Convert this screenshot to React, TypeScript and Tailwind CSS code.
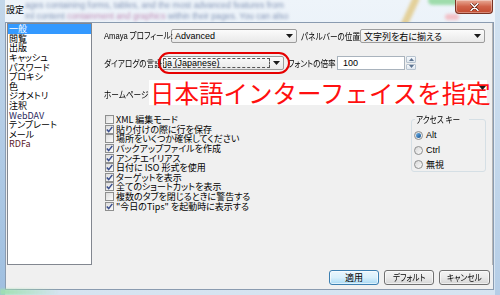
import React from "react";

const items = ["一般", "閲覧", "出版", "キャッシュ", "パスワード", "プロキシ", "色", "ジオメトリ", "注釈", "WebDAV", "テンプレート", "メール", "RDFa"];

const checks: [string, boolean][] = [
  ["XML 編集モード", false],
  ["貼り付けの際に行を保存", true],
  ["場所をいくつか確保してください", false],
  ["バックアップファイルを作成", true],
  ["アンチエイリアス", true],
  ["日付に ISO 形式を使用", true],
  ["ターゲットを表示", true],
  ["全てのショートカットを表示", true],
  ["複数のタブを閉じるときに警告する", false],
  ["\"今日のTips\" を起動時に表示する", true],
];

function Arrow() {
  return (
    <svg width="7" height="4" viewBox="0 0 7 4" className="shrink-0">
      <path d="M0 0 H7 L3.5 4 Z" fill="#1a1a1a" />
    </svg>
  );
}

function Label({ children }: { children: React.ReactNode }) {
  return <span className="inline-block whitespace-nowrap scale-x-[0.85] origin-left">{children}</span>;
}

function Check({ on }: { on: boolean }) {
  return (
    <span className="w-[9px] h-[9px] shrink-0 border border-[#8e8f8f] bg-gradient-to-br from-[#dcdcdc] to-[#fbfbfb] flex items-center justify-center">
      {on && (
        <svg width="7" height="7" viewBox="0 0 7 7">
          <path d="M0.8 3.4 L2.7 5.6 L6.3 0.9" stroke="#3b4f8e" strokeWidth="1.5" fill="none" />
        </svg>
      )}
    </span>
  );
}

function Radio({ on }: { on: boolean }) {
  return (
    <span className="w-[9px] h-[9px] shrink-0 rounded-full border border-[#8e8f8f] bg-gradient-to-br from-[#d8d8d8] to-[#fafafa] flex items-center justify-center">
      {on && <span className="w-[5px] h-[5px] rounded-full bg-gradient-to-br from-[#6fb6ec] to-[#12508f]" />}
    </span>
  );
}

export default function App() {
  return (
    <div className="relative w-[500px] h-[295px] overflow-hidden bg-gradient-to-b from-[#eef4fa] to-[#d6e4f1] font-['Noto_Sans_CJK_JP',sans-serif] [font-feature-settings:'palt'] text-[9px] leading-none text-black">
      {/* blurred desktop behind the glass */}
      <div className="absolute left-0 top-0 w-[500px] h-[22px] blur-[1.4px] pointer-events-none">
        <div className="absolute left-[25px] top-[1px] whitespace-nowrap text-[8.6px] text-[#8193b5] font-['Liberation_Sans',sans-serif]">
          ages containing forms, tables, and the most advanced features from
        </div>
        <div className="absolute left-[25px] top-[12px] whitespace-nowrap text-[8.6px] text-[#8193b5] font-['Liberation_Sans',sans-serif]">
          ml content <span className="text-[#c08bb6]">containment and graphics</span> within their pages. You can also
        </div>
        <div className="absolute left-[406px] top-[-4px] w-[7px] h-[34px] rotate-[25deg] bg-[#e3d09a]" />
        <div className="absolute left-[428px] top-[-4px] w-[32px] h-[9px] rounded-full bg-[#9fdcac]" />
        <div className="absolute left-[445px] top-[14px] w-[14px] h-[6px] rounded-full bg-[#f2c0c7]" />
      </div>
      <div className="absolute left-0 top-0 w-[5px] h-[295px] bg-gradient-to-b from-[#c3d7ea] to-[#9fbfe0] pointer-events-none" />
      <div className="absolute right-0 top-0 w-[5px] h-[295px] bg-gradient-to-b from-[#d4e3f1] to-[#b5cde6] pointer-events-none" />

      <div className="relative flex flex-col h-full">
        {/* title bar */}
        <div className="h-[22px] shrink-0 flex items-center pl-[6px] pb-[4px] relative">
          <span className="text-[9px]">設定</span>
          <div className="absolute right-[7px] top-0 w-[38px] h-[14px] rounded-b-[4px] border border-t-0 border-[#7a3324] bg-gradient-to-b from-[#e8ab98] via-[#d0634a] to-[#c24a2f] flex items-center justify-center shadow-[inset_0_0_0_1px_rgba(255,255,255,0.35)]">
            <svg width="9" height="8" viewBox="0 0 9 8">
              <path d="M1 0.5 L8 7.5 M8 0.5 L1 7.5" stroke="#5a1a0c" strokeWidth="2.6" strokeLinecap="round" />
              <path d="M1 0.5 L8 7.5 M8 0.5 L1 7.5" stroke="#ffffff" strokeWidth="1.5" strokeLinecap="round" />
            </svg>
          </div>
        </div>

        {/* client area */}
        <div className="flex-1 ml-[5px] mr-[6px] mb-[5px] bg-[#f0f0f0] border border-[#8a9bb0] flex flex-col min-h-0">
          <div className="flex h-[242px] shrink-0">
            {/* category list */}
            <div className="ml-[1px] w-[85px] h-[242px] bg-white border border-[#828790] shrink-0">
              {items.map((t, i) => (
                <div
                  key={t}
                  className={
                    i === 0
                      ? "h-[9.6px] flex items-center pl-[1px] bg-[#3399ff] text-white"
                      : i === 9
                      ? "h-[9.6px] flex items-center pl-[1px] text-[#2a275c]"
                      : i === 12
                      ? "h-[9.6px] flex items-center pl-[1px] text-[#5e1b2b]"
                      : "h-[9.6px] flex items-center pl-[1px]"
                  }
                >
                  {t}
                </div>
              ))}
            </div>

            {/* settings panel */}
            <div className="relative flex-1 pl-[12px] pt-[6px] border-r border-[#b5b5b5]">
              {/* row 1 */}
              <div className="flex items-center h-[14px]">
                <div className="w-[67px] shrink-0">
                  <Label>
                    <span className="font-['Liberation_Sans',sans-serif]">Amaya</span> プロフィール:
                  </Label>
                </div>
                <div className="w-[126px] shrink-0 h-[14px] border border-[#9c9c9c] rounded-[2px] bg-gradient-to-b from-[#fbfbfb] to-[#e9e9e9] flex items-center pl-[3px] pr-[3px] justify-between">
                  <span className="font-['Liberation_Sans',sans-serif]">Advanced</span>
                  <Arrow />
                </div>
                <div className="ml-[4px] w-[59px] shrink-0">
                  <Label>パネルバーの位置</Label>
                </div>
                <div className="w-[125px] shrink-0 h-[14px] border border-[#9c9c9c] rounded-[2px] bg-gradient-to-b from-[#fbfbfb] to-[#e9e9e9] flex items-center pl-[3px] pr-[3px] justify-between">
                  <span>文字列を右に揃える</span>
                  <Arrow />
                </div>
              </div>

              {/* row 2 */}
              <div className="flex items-center h-[14px] mt-[13px]">
                <div className="w-[56px] shrink-0">
                  <Label>ダイアログの言語</Label>
                </div>
                <div className="w-[124px] shrink-0 h-[14px] border border-[#9c9c9c] rounded-[2px] bg-gradient-to-b from-[#fbfbfb] to-[#e9e9e9] flex items-center pl-[2px] pr-[3px]">
                  <div className="w-[107px] h-[10px] border border-dashed border-[#555] flex items-center pl-[1px] font-['Liberation_Sans',sans-serif]">
                    ja (Japanese)
                  </div>
                  <div className="flex-1 flex justify-end">
                    <Arrow />
                  </div>
                </div>
                <div className="ml-[4px] w-[49px] shrink-0">
                  <Label>フォントの倍率</Label>
                </div>
                <div className="w-[68px] shrink-0 h-[14px] border border-[#a9b3bd] bg-white flex items-center pl-[5px] font-['Liberation_Sans',sans-serif]">
                  100
                </div>
                <div className="ml-[1px] w-[10px] h-[14px] flex flex-col gap-[1px]">
                  <div className="flex-1 border border-[#b7c3cf] rounded-[1px] bg-gradient-to-b from-[#f6f9fc] to-[#dfe7ef] flex items-center justify-center">
                    <svg width="5" height="3" viewBox="0 0 5 3"><path d="M0 3 L2.5 0 L5 3 Z" fill="#5d7390" /></svg>
                  </div>
                  <div className="flex-1 border border-[#b7c3cf] rounded-[1px] bg-gradient-to-b from-[#f6f9fc] to-[#dfe7ef] flex items-center justify-center">
                    <svg width="5" height="3" viewBox="0 0 5 3"><path d="M0 0 L5 0 L2.5 3 Z" fill="#5d7390" /></svg>
                  </div>
                </div>
              </div>

              {/* row 3 */}
              <div className="flex h-[25px] mt-[10px]">
                <div className="w-[45px] shrink-0 pt-[10px]">
                  <Label>ホームページ</Label>
                </div>
                <div className="w-[338px] shrink-0 h-[25px] bg-white flex items-start relative">
                  <span className="text-[24.5px] leading-[25px] text-[#ff1010] whitespace-nowrap ml-[1px] [font-feature-settings:normal]">
                    日本語インターフェイスを指定
                  </span>
                  <div className="absolute right-[1px] top-[6px]">
                    <Arrow />
                  </div>
                </div>
              </div>

              {/* checkboxes + access key */}
              <div className="flex justify-between pr-[6px] mt-[10px]">
                <div className="pl-[1px]">
                  {checks.map(([t, on]) => (
                    <div key={t} className="h-[9.6px] flex items-center gap-[2px] whitespace-nowrap">
                      <Check on={on} />
                      <span>{t}</span>
                    </div>
                  ))}
                </div>
                <fieldset className="w-[75px] h-[57px] border border-[#d5dfe5] rounded-[3px] pl-[2px]">
                  <legend className="ml-[1px] px-[1px]">
                    <Label>アクセス キー</Label>
                  </legend>
                  <div className="flex flex-col gap-[5.6px] mt-[7px]">
                    <div className="flex items-center gap-[3px] h-[9px]">
                      <Radio on={true} />
                      <span className="font-['Liberation_Sans',sans-serif]">Alt</span>
                    </div>
                    <div className="flex items-center gap-[3px] h-[9px]">
                      <Radio on={false} />
                      <span className="font-['Liberation_Sans',sans-serif]">Ctrl</span>
                    </div>
                    <div className="flex items-center gap-[3px] h-[9px]">
                      <Radio on={false} />
                      <span>無視</span>
                    </div>
                  </div>
                </fieldset>
              </div>

              {/* annotation ellipse */}
              <div className="absolute left-[66px] top-[29px] w-[132px] h-[22px] rounded-full border-2 border-[#e60000] pointer-events-none" />
            </div>
          </div>

          {/* footer buttons */}
          <div className="flex-1 flex items-center justify-end gap-[5px] pr-[3px] pt-[1px]">
            <div className="w-[50px] h-[15px] rounded-[3px] border border-[#3c7fb1] bg-gradient-to-b from-[#eaf6fd] via-[#d9f0fc] to-[#a8d9f4] flex items-center justify-center shadow-[inset_0_0_0_1px_rgba(255,255,255,0.6)]">
              適用
            </div>
            <div className="w-[50px] h-[15px] rounded-[3px] border border-[#707070] bg-gradient-to-b from-[#f4f4f4] via-[#eaeaea] to-[#d6d6d6] flex items-center justify-center shadow-[inset_0_0_0_1px_rgba(255,255,255,0.6)]">
              <span className="inline-block scale-x-[0.85]">デフォルト</span>
            </div>
            <div className="w-[51px] h-[15px] rounded-[3px] border border-[#707070] bg-gradient-to-b from-[#f4f4f4] via-[#eaeaea] to-[#d6d6d6] flex items-center justify-center shadow-[inset_0_0_0_1px_rgba(255,255,255,0.6)]">
              <span className="inline-block scale-x-[0.85]">キャンセル</span>
            </div>
          </div>
        </div>
      </div>
      <div className="absolute left-0 bottom-0 w-[60px] h-[6px] bg-gradient-to-r from-[#9fe0b0] to-transparent blur-[1px] pointer-events-none" />
    </div>
  );
}
